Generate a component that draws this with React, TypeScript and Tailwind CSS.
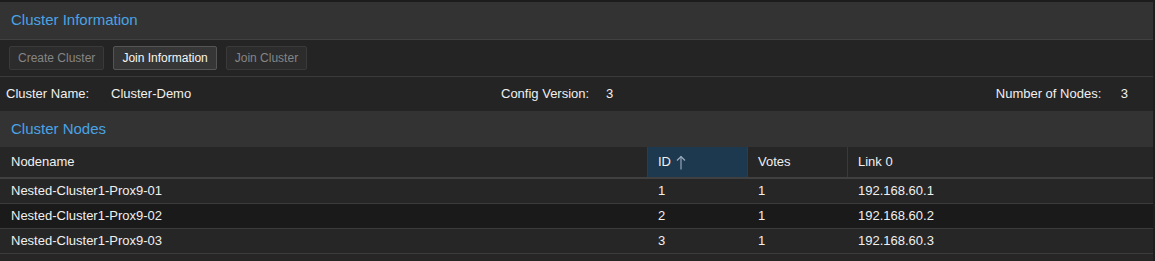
import React from "react";

const rows = [
  { name: "Nested-Cluster1-Prox9-01", id: "1", votes: "1", link: "192.168.60.1" },
  { name: "Nested-Cluster1-Prox9-02", id: "2", votes: "1", link: "192.168.60.2" },
  { name: "Nested-Cluster1-Prox9-03", id: "3", votes: "1", link: "192.168.60.3" },
];

export default function App() {
  return (
    <div
      className="w-[1155px] h-[261px] overflow-hidden bg-[#262626] border-r-2 border-[#1e1e1e] flex flex-col"
      style={{ fontFamily: '"Liberation Sans", Arial, sans-serif' }}
    >
      <div className="h-[2px] bg-[#1c1c1c] shrink-0" />
      <div className="h-[38px] shrink-0 bg-[#333333] border-b border-[#414141] flex items-center px-[11px] text-[15px] text-[#4aa3e4]">
        Cluster Information
      </div>
      <div className="h-[37px] shrink-0 bg-[#242424] border-b border-[#3a3a3a] flex items-center gap-[9px] px-[9px] text-[12px]">
        <button className="h-[24px] px-[8px] rounded-[2px] bg-[#2c2c2c] border border-[#3a3a3a] text-[#858585]">
          Create Cluster
        </button>
        <button className="h-[24px] px-[8px] rounded-[2px] bg-[#363636] border border-[#555555] text-[#f5f5f5]">
          Join Information
        </button>
        <button className="h-[24px] px-[8px] rounded-[2px] bg-[#2c2c2c] border border-[#3a3a3a] text-[#858585]">
          Join Cluster
        </button>
      </div>
      <div className="h-[34px] shrink-0 bg-[#242424] flex items-center pl-[6px] text-[13px] text-[#f0f0f0]">
        <div className="w-[495px] flex">
          <span className="w-[105px]">Cluster Name:</span>
          <span>Cluster-Demo</span>
        </div>
        <div className="flex-1 flex">
          <span className="w-[105px]">Config Version:</span>
          <span>3</span>
        </div>
        <div className="flex pr-[25px]">
          <span className="w-[125px]">Number of Nodes:</span>
          <span>3</span>
        </div>
      </div>
      <div className="h-[36px] shrink-0 bg-[#333333] flex items-center px-[11px] text-[15px] text-[#4aa3e4]">
        Cluster Nodes
      </div>
      <div className="h-[32px] shrink-0 bg-[#262626] border-b-2 border-[#404040] flex text-[13px] text-[#f0f0f0]">
        <div className="w-[648px] border-r border-[#3a3a3a] flex items-center px-[11px]">Nodename</div>
        <div className="w-[100px] border-r border-[#3a3a3a] bg-[#1d3950] flex items-center px-[10px] gap-[5px]">
          <span>ID</span>
          <svg width="10" height="15" viewBox="0 0 10 15" fill="none" stroke="#9fb0bf" strokeWidth="1.1">
            <path d="M5 1.5 V14.5" />
            <path d="M1 5.5 L5 1.5 L9 5.5" />
          </svg>
        </div>
        <div className="w-[100px] border-r border-[#3a3a3a] flex items-center px-[10px]">Votes</div>
        <div className="flex-1 flex items-center px-[10px]">Link 0</div>
      </div>
      {rows.map((r, i) => (
        <div
          key={r.name}
          className={`h-[25px] shrink-0 border-b border-[#3c3c3c] flex items-center text-[13px] text-[#f0f0f0] ${
            i === 1 ? "bg-[#1a1a1a]" : "bg-[#262626]"
          }`}
        >
          <div className="w-[648px] px-[11px]">{r.name}</div>
          <div className="w-[100px] px-[10px]">{r.id}</div>
          <div className="w-[100px] px-[10px]">{r.votes}</div>
          <div className="flex-1 px-[10px]">{r.link}</div>
        </div>
      ))}
      <div className="flex-1 bg-[#262626]" />
    </div>
  );
}
